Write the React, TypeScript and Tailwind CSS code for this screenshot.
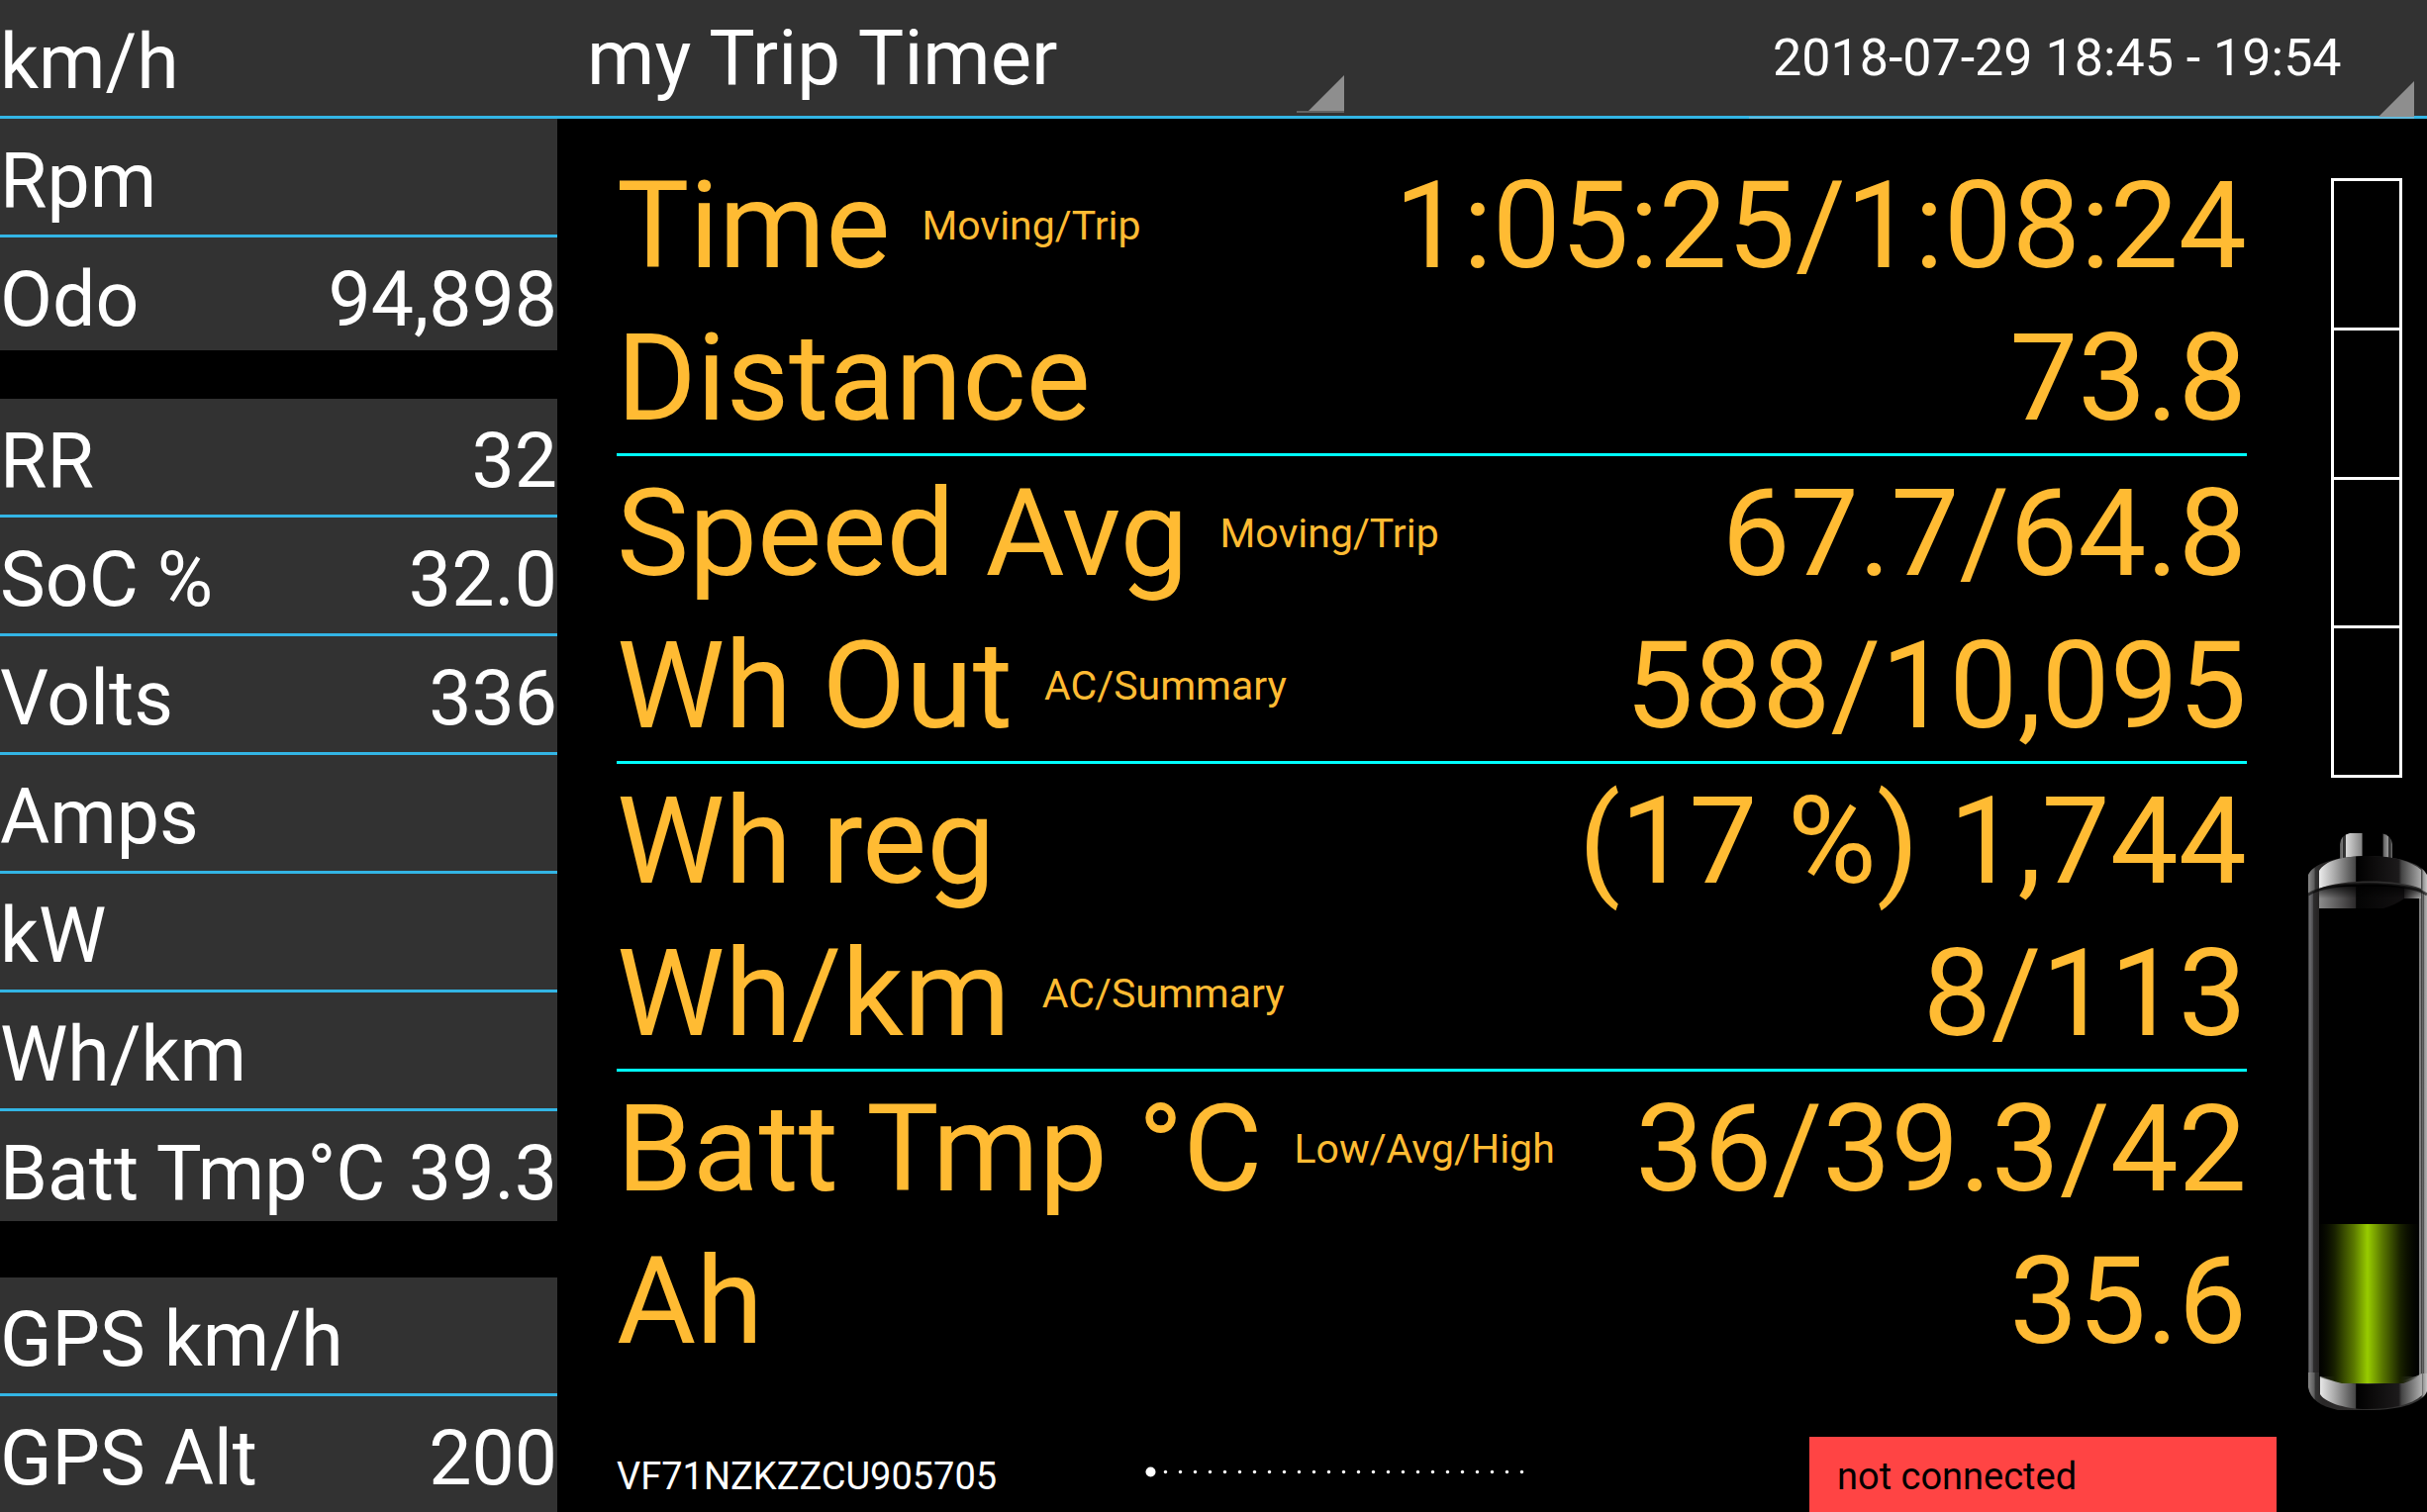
import React, { useState } from 'react';

interface Reading {
  label: string;
  value?: string;
}

interface TripStat {
  label: string;
  hint?: string;
  value: string;
}

const vehicleReadings: Reading[] = [{ label: 'Rpm' }, { label: 'Odo', value: '94,898' }];

const batteryReadings: Reading[] = [
  { label: 'RR', value: '32' },
  { label: 'SoC %', value: '32.0' },
  { label: 'Volts', value: '336' },
  { label: 'Amps' },
  { label: 'kW' },
  { label: 'Wh/km' },
  { label: 'Batt Tmp°C', value: '39.3' },
];

const gpsReadings: Reading[] = [{ label: 'GPS km/h' }, { label: 'GPS Alt', value: '200' }];

const tripGroups: TripStat[][] = [
  [
    { label: 'Time', hint: 'Moving/Trip', value: '1:05:25/1:08:24' },
    { label: 'Distance', value: '73.8' },
  ],
  [
    { label: 'Speed Avg', hint: 'Moving/Trip', value: '67.7/64.8' },
    { label: 'Wh Out', hint: 'AC/Summary', value: '588/10,095' },
  ],
  [
    { label: 'Wh reg', value: '(17 %) 1,744' },
    { label: 'Wh/km', hint: 'AC/Summary', value: '8/113' },
  ],
  [
    { label: 'Batt Tmp °C', hint: 'Low/Avg/High', value: '36/39.3/42' },
    { label: 'Ah', value: '35.6' },
  ],
];

const PAGE_COUNT = 26;

const ReadingList: React.FC<{ items: Reading[]; className?: string }> = ({ items, className }) => (
  <dl className={`flex flex-col text-[77px] leading-[117px] text-white whitespace-nowrap ${className || ''}`}>
    {items.map((item) => (
      <div
        key={item.label}
        className="flex h-[120px] shrink-0 justify-between border-b-3 border-[#33b5e5] bg-[#323232] pt-[5px] last:h-auto last:min-h-0 last:flex-1 last:border-b-0"
      >
        <dt>{item.label}</dt>
        <dd>{item.value}</dd>
      </div>
    ))}
  </dl>
);

const TripRow: React.FC<{ stat: TripStat }> = ({ stat }) => (
  <div className="flex h-[154px] items-center pt-0.5 whitespace-nowrap">
    <dt className="flex items-center gap-8 text-[123px] leading-[152px]">
      {stat.label}
      {stat.hint && <small className="text-[41px] leading-[152px]">{stat.hint}</small>}
    </dt>
    <dd className="ml-auto text-[123px] leading-[152px]">{stat.value}</dd>
  </div>
);

// Corner mark of a drop-down
const Corner = ({ className }: { className: string }) => (
  <svg className={`pointer-events-none absolute right-0 ${className}`} width="36" height="36" viewBox="0 0 36 36" fill="#8e8e8e">
    <path d="M36 0V36H0Z" />
  </svg>
);

const PowerGauge = () => (
  <div className="ml-[55px] flex h-[606px] w-[72px] flex-col divide-y-3 divide-white border-3 border-white">
    <div className="flex-1" />
    <div className="flex-1" />
    <div className="flex-1" />
    <div className="flex-1" />
  </div>
);

const Battery = () => (
  <svg className="ml-8 mt-14" width="120" height="583" viewBox="0 0 120 583" role="img" aria-label="Battery">
    <defs>
      <linearGradient id="terminal">
        <stop offset="0" stopColor="#555" />
        <stop offset="0.05" stopColor="#777" />
        <stop offset="0.06" stopColor="#2a2a2a" />
        <stop offset="0.11" stopColor="#3a3a3a" />
        <stop offset="0.12" stopColor="#d8d8d8" />
        <stop offset="0.42" stopColor="#848484" />
        <stop offset="0.43" stopColor="#000" />
        <stop offset="0.81" stopColor="#000" />
        <stop offset="0.84" stopColor="#666" />
        <stop offset="0.92" stopColor="#999" />
        <stop offset="0.93" stopColor="#333" />
        <stop offset="0.96" stopColor="#333" />
        <stop offset="1" stopColor="#777" />
      </linearGradient>
      <linearGradient id="shell" gradientUnits="userSpaceOnUse" x1="0" y1="0" x2="120" y2="0">
        <stop offset="0" stopColor="#8a8a8a" />
        <stop offset="0.05" stopColor="#5c5c5c" />
        <stop offset="0.06" stopColor="#333" />
        <stop offset="0.12" stopColor="#2a2828" />
        <stop offset="0.95" stopColor="#333" />
        <stop offset="0.97" stopColor="#999" />
        <stop offset="1" stopColor="#c4c4c4" />
      </linearGradient>
      <linearGradient id="metal" gradientUnits="userSpaceOnUse" x1="11" y1="0" x2="114" y2="0">
        <stop offset="0" stopColor="#ececec" />
        <stop offset="0.15" stopColor="#aaa" />
        <stop offset="0.36" stopColor="#444" />
        <stop offset="0.365" stopColor="#000" />
        <stop offset="0.5" stopColor="#0a0909" />
        <stop offset="0.78" stopColor="#1c1a1b" />
        <stop offset="0.81" stopColor="#444" />
        <stop offset="1" stopColor="#aaa" />
      </linearGradient>
      <linearGradient id="under" gradientUnits="userSpaceOnUse" x1="11" y1="0" x2="114" y2="0">
        <stop offset="0" stopColor="#8c8c8c" />
        <stop offset="0.36" stopColor="#2c2a2b" />
        <stop offset="0.365" stopColor="#040404" />
        <stop offset="0.83" stopColor="#121011" />
        <stop offset="0.84" stopColor="#2a2829" />
        <stop offset="1" stopColor="#aaa" />
      </linearGradient>
      <linearGradient id="underShade" x2="0" y2="1">
        <stop offset="0" stopColor="#000" stopOpacity="0.7" />
        <stop offset="1" stopColor="#000" stopOpacity="0" />
      </linearGradient>
      <linearGradient id="leftWall">
        <stop offset="0" stopColor="#3a3a3a" />
        <stop offset="0.15" stopColor="#6c6c70" />
        <stop offset="0.4" stopColor="#505052" />
        <stop offset="0.5" stopColor="#2e2d2e" />
        <stop offset="1" stopColor="#242222" />
      </linearGradient>
      <linearGradient id="rightWall">
        <stop offset="0" stopColor="#777" />
        <stop offset="0.18" stopColor="#888" />
        <stop offset="0.25" stopColor="#222" />
        <stop offset="0.42" stopColor="#777" />
        <stop offset="0.5" stopColor="#333" />
        <stop offset="0.7" stopColor="#999" />
        <stop offset="1" stopColor="#b0b0b0" />
      </linearGradient>
      <linearGradient id="charge" gradientUnits="userSpaceOnUse" x1="8" y1="0" x2="114" y2="0">
        <stop offset="0" stopColor="#050700" stopOpacity="0" />
        <stop offset="0.18" stopColor="#1a2300" />
        <stop offset="0.36" stopColor="#5a7800" />
        <stop offset="0.49" stopColor="#98cc00" />
        <stop offset="0.63" stopColor="#5a7800" />
        <stop offset="0.8" stopColor="#1a2300" />
        <stop offset="1" stopColor="#050700" stopOpacity="0" />
      </linearGradient>
    </defs>

    {/* walls */}
    <rect x="0" y="56" width="11" height="494" fill="url(#leftWall)" />
    <rect x="112" y="56" width="8" height="494" fill="url(#rightWall)" />

    {/* terminal and collar */}
    <path d="M32 26V11Q33 2 42 0H74Q84 2 85 11V26Z" fill="url(#terminal)" />
    <path d="M11 54H114V66H97Q89 72 76 76H11Z" fill="url(#under)" />
    <path d="M11 54H114V66H11Z" fill="url(#underShade)" />
    <path d="M0 62V42C5 32 22 24 60 23C98 24 115 32 120 42V62C100 48 20 48 0 62Z" fill="url(#shell)" />
    <path d="M11 56V38C17 28 34 23 60 23C87 23 105 29 114 37V56C90 46 35 46 11 56Z" fill="url(#metal)" />
    <path d="M0 62C20 48 100 48 120 62" fill="none" stroke="#000" strokeOpacity="0.6" strokeWidth="3" />

    {/* base */}
    <path d="M0 545H11V549H114V546H120V564C116 575 96 583 60 583H30C12 579 2 572 0 560Z" fill="url(#shell)" />
    <path d="M12 549Q30 556 60 557Q96 556 115 546V568C104 578 84 582 60 582C34 582 16 574 12 567Z" fill="url(#metal)" />

    {/* charge level */}
    <path d="M11 395H112V548Q108 552 96 556H34Q20 552 11 550Z" fill="url(#charge)" />
  </svg>
);

const App: React.FC = () => {
  const [timer, setTimer] = useState('my Trip Timer');
  const [trip, setTrip] = useState('2018-07-29 18:45 - 19:54');

  return (
    <div className="flex min-h-screen flex-col bg-black font-[Roboto,sans-serif] text-white">
      <header className="flex h-[120px] border-b-3 border-[#33b5e5] bg-[#323232] whitespace-nowrap">
        <div className="w-[563px] shrink-0 pt-[5px] text-[77px] leading-[117px]">km/h</div>
        <div className="relative ml-[30px] w-[765px] shrink-0">
          <select
            aria-label="Timer"
            value={timer}
            onChange={(e) => setTimer(e.target.value)}
            className="h-[117px] w-full appearance-none bg-transparent text-[78px] leading-[117px] outline-none"
          >
            <option>my Trip Timer</option>
          </select>
          <Corner className="bottom-[5px]" />
          <div className="absolute right-0 bottom-[3px] h-0.5 w-12 bg-[#636363]" />
        </div>
        <div className="relative mr-[13px] ml-auto w-[672px]">
          <select
            aria-label="Trip"
            value={trip}
            onChange={(e) => setTrip(e.target.value)}
            className="h-[117px] w-full appearance-none bg-transparent pl-6 text-[52px] leading-[117px] outline-none"
          >
            <option>2018-07-29 18:45 - 19:54</option>
          </select>
          <Corner className="-bottom-px" />
          <div className="absolute right-0 -bottom-[3px] h-0.5 w-full bg-[#63bbdd]" />
        </div>
      </header>

      <div className="flex flex-1">
        <aside className="flex w-[563px] shrink-0 flex-col">
          <ReadingList items={vehicleReadings} className="h-[234px]" />
          <ReadingList items={batteryReadings} className="mt-[49px] h-[831px]" />
          <ReadingList items={gpsReadings} className="mt-[57px] h-[237px]" />
        </aside>

        <main className="flex flex-1 flex-col pl-[60px]">
          <div className="mt-[30px] mr-[30px] divide-y-3 divide-[#00ffff] text-[#ffbb33]">
            {tripGroups.map((group) => (
              <dl key={group[0].label}>
                {group.map((stat) => (
                  <TripRow key={stat.label} stat={stat} />
                ))}
              </dl>
            ))}
          </div>

          <footer className="mt-auto flex h-[76px] text-[38px] leading-[72px] whitespace-nowrap">
            <div className="w-[534px] pt-1">VF71NZKZZCU905705</div>
            <svg width="390" height="72" viewBox="0 0 390 72" fill="#fff">
              <circle cx="5.5" cy="35.5" r="5" />
              {Array.from({ length: PAGE_COUNT - 1 }, (_, i) => (
                <circle key={i} cx={20.5 + i * 15} cy="35.5" r="1.7" />
              ))}
            </svg>
            <div className="ml-auto w-[472px] bg-[#ff4444] pt-1 pl-7 text-black">not connected</div>
          </footer>
        </main>

        <div className="w-[152px] shrink-0 pt-[60px]">
          <PowerGauge />
          <Battery />
        </div>
      </div>
    </div>
  );
};

export default App;
